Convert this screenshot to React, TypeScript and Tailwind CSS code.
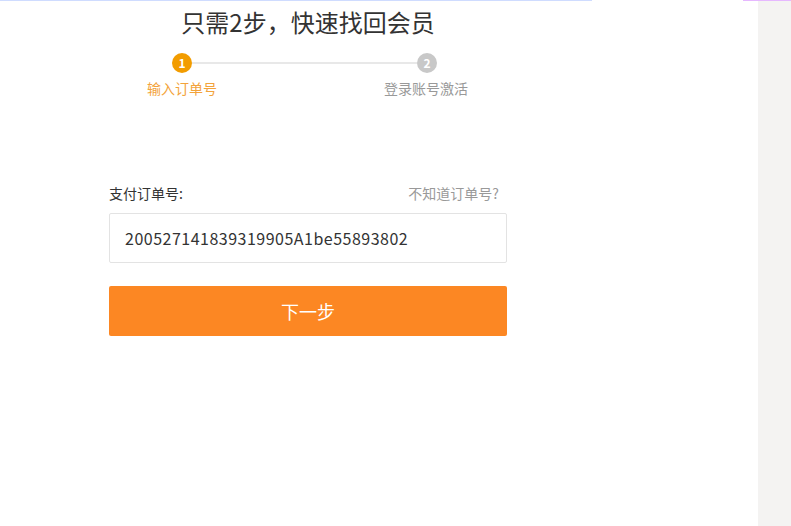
import React from "react";

export default function App() {
  return (
    <div
      className="w-[791px] h-[526px] flex flex-col bg-white overflow-hidden"
      style={{ fontFamily: '"Noto Sans CJK SC", "Noto Sans", sans-serif' }}
    >
      <div className="flex h-px shrink-0">
        <div className="w-[592px] bg-[#cfdcff]" />
        <div className="flex-1" />
        <div className="w-[48px] bg-[#e6b8ff]" />
      </div>
      <div className="flex flex-1">
        <div className="flex-1 pl-[109px]">
          <div className="w-[398px] flex flex-col">
            <h1 className="mt-[5px] text-center text-[24px] leading-[32px] text-[#333] font-normal">
              只需2步，快速找回会员
            </h1>
            <div className="mt-[15px] flex flex-col">
              <div className="flex items-center pl-[63px] pr-[70px]">
                <div className="w-5 h-5 rounded-full bg-[#f29c00] text-white text-[12px] leading-5 text-center font-bold">
                  1
                </div>
                <div className="flex-1 h-[2px] bg-[#e8e8e8]" />
                <div className="w-5 h-5 rounded-full bg-[#c8c8c8] text-white text-[12px] leading-5 text-center font-bold">
                  2
                </div>
              </div>
              <div className="flex justify-between mt-[4px] text-[14px] leading-[22px]">
                <span className="ml-[38px] text-[#f3a33b]">输入订单号</span>
                <span className="mr-[39px] text-[#999]">登录账号激活</span>
              </div>
            </div>
            <div className="mt-[84px] flex justify-between items-center text-[14px] leading-[20px]">
              <span className="text-[#333]">支付订单号:</span>
              <span className="mr-[8px] text-[#999]">不知道订单号?</span>
            </div>
            <div className="mt-[10px] h-[50px] border border-[#e3e3e3] rounded-[2px] flex items-center pl-[15px] text-[16px] tracking-[0.5px] text-[#333]">
              200527141839319905A1be55893802
            </div>
            <button className="mt-[23px] h-[50px] rounded-[2px] bg-[#fc8723] text-white text-[18px]">
              下一步
            </button>
          </div>
        </div>
        <div className="w-[33px] bg-[#f4f3f2]" />
      </div>
    </div>
  );
}
